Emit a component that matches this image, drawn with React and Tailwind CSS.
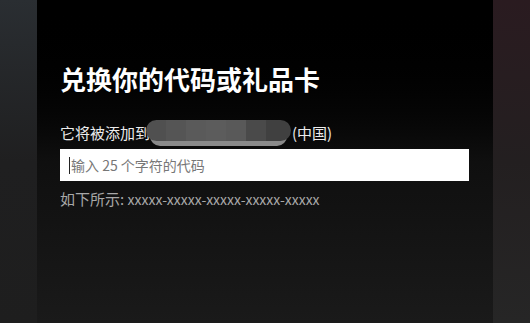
export default function App() {
  const font = { fontFamily: '"Noto Sans CJK SC", "Noto Sans", sans-serif' };
  return (
    <div className="flex h-[323px] w-[530px] overflow-hidden" style={font}>
      <div className="w-[37px] bg-gradient-to-b from-[#2a2e32] via-[#1f1f20] to-[#1e1e1e]" />
      <div className="flex flex-1 flex-col bg-gradient-to-b from-[#000000] via-[#0f0f0f] to-[#1a1a1a] pl-[23px] pt-[62px]">
        <h1 className="h-[34px] text-[26px] font-bold leading-[34px] text-white">兑换你的代码或礼品卡</h1>
        <div className="mt-[24px] flex h-[26px] items-center text-[15px] text-[#ececec]">
          <span>它将被添加到</span>
          <span className="relative -ml-[4px] inline-block h-[26px] w-[145px]">
            <span className="absolute inset-x-[4px] bottom-0 h-[10px] rounded-b-full bg-[#8a8a8a]" />
            <span className="absolute inset-x-0 top-0 flex h-[21px] overflow-hidden rounded-full">
              <span className="w-[20px] bg-[#505050]" />
              <span className="w-[20px] bg-[#555555]" />
              <span className="w-[20px] bg-[#5a5a5a]" />
              <span className="w-[20px] bg-[#5c5c5c]" />
              <span className="w-[20px] bg-[#595959]" />
              <span className="w-[20px] bg-[#4a4a4a]" />
              <span className="w-[25px] bg-[#404040]" />
            </span>
          </span>
          <span className="ml-[1px]">(中国)</span>
        </div>
        <div className="mt-[3px] flex h-[32px] w-[409px] items-center bg-white pl-[9px] text-[14px] text-[#777777]">
          <span className="mr-[1px] h-[17px] w-[1px] bg-[#222222]" />
          <span>输入 25 个字符的代码</span>
        </div>
        <div className="mt-[7px] text-[15px] leading-[22px] text-[#a8a8a8]">
          如下所示: <span className="text-[14px]">xxxxx-xxxxx-xxxxx-xxxxx-xxxxx</span>
        </div>
      </div>
      <div className="w-[37px] bg-gradient-to-b from-[#2a1b20] via-[#231f20] to-[#262626]" />
    </div>
  );
}
